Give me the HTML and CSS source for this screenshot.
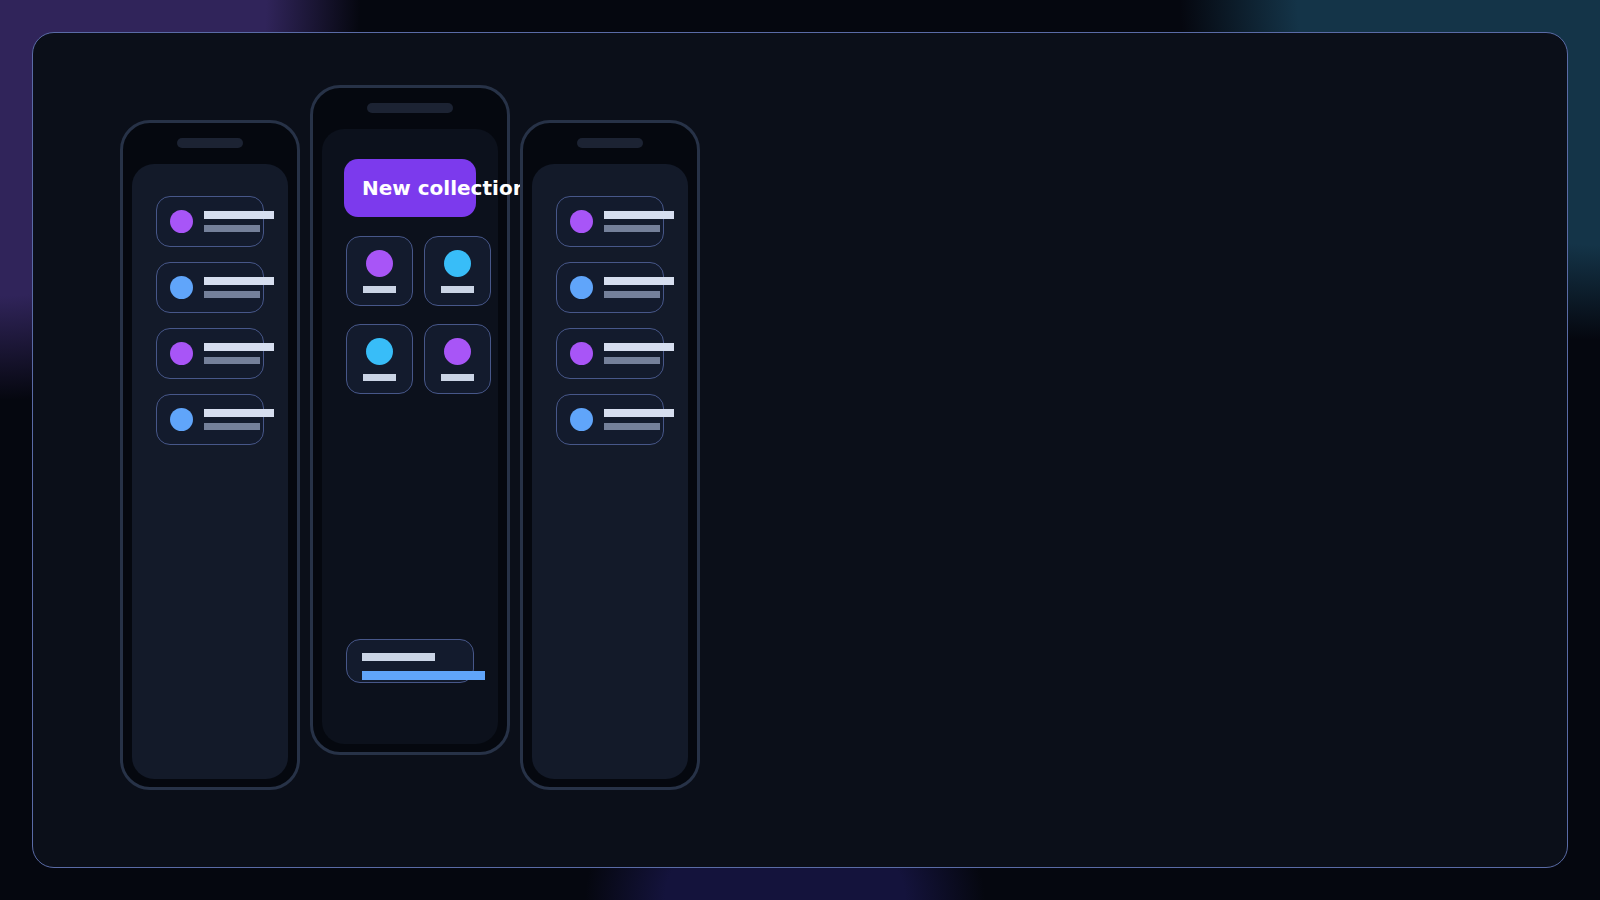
FILE: index.html
```
<!DOCTYPE html>
<html lang="en">
  <head>
    <meta charset="UTF-8" />
    <meta name="viewport" content="width=device-width, initial-scale=1.0" />
    <title>App Screens Preview</title>
    <link rel="stylesheet" href="styles.css">
  </head>
  <body>
    <div class="frame">
      <div class="phones">
        <!-- Feed list -->
        <div class="phone">
          <div class="notch"></div>
          <div class="screen">
            <div class="list-item">
              <span class="dot purple"></span>
              <div class="lines"><span class="line"></span><span class="line sub"></span></div>
            </div>
            <div class="list-item">
              <span class="dot blue"></span>
              <div class="lines"><span class="line"></span><span class="line sub"></span></div>
            </div>
            <div class="list-item">
              <span class="dot purple"></span>
              <div class="lines"><span class="line"></span><span class="line sub"></span></div>
            </div>
            <div class="list-item">
              <span class="dot blue"></span>
              <div class="lines"><span class="line"></span><span class="line sub"></span></div>
            </div>
          </div>
        </div>

        <!-- Collection screen -->
        <div class="phone featured">
          <div class="notch"></div>
          <div class="screen dark">
            <div class="collection-btn">New collection</div>
            <div class="tile-grid">
              <div class="tile"><span class="dot big purple"></span><span class="tile-bar"></span></div>
              <div class="tile"><span class="dot big cyan"></span><span class="tile-bar"></span></div>
              <div class="tile"><span class="dot big cyan"></span><span class="tile-bar"></span></div>
              <div class="tile"><span class="dot big purple"></span><span class="tile-bar"></span></div>
            </div>
            <div class="progress-card">
              <span class="progress-title"></span>
              <span class="progress-bar"></span>
            </div>
          </div>
        </div>

        <!-- Feed list (copy) -->
        <div class="phone">
          <div class="notch"></div>
          <div class="screen">
            <div class="list-item">
              <span class="dot purple"></span>
              <div class="lines"><span class="line"></span><span class="line sub"></span></div>
            </div>
            <div class="list-item">
              <span class="dot blue"></span>
              <div class="lines"><span class="line"></span><span class="line sub"></span></div>
            </div>
            <div class="list-item">
              <span class="dot purple"></span>
              <div class="lines"><span class="line"></span><span class="line sub"></span></div>
            </div>
            <div class="list-item">
              <span class="dot blue"></span>
              <div class="lines"><span class="line"></span><span class="line sub"></span></div>
            </div>
          </div>
        </div>
      </div>
    </div>
  </body>
</html>
```

FILE: styles.css
```
* {
  margin: 0;
  padding: 0;
  box-sizing: border-box;
  font-family: "DejaVu Sans", Verdana, sans-serif;
}

html,
body {
  height: 100%;
}

body {
  overflow: hidden;
  padding: 32px;
  background:
    radial-gradient(ellipse 360px 400px at 0 0, #30245a 0, #30245a 74%, rgba(48, 36, 90, 0) 100%),
    radial-gradient(ellipse 420px 340px at 100% 0, #143448 0, #143448 72%, rgba(20, 52, 72, 0) 100%),
    radial-gradient(ellipse 200px 140px at 785px 100%, #14133c 0, #14133c 60%, rgba(20, 19, 60, 0) 100%),
    #05070f;
}

.frame {
  height: 100%;
  background: #0b0f19;
  border: 1px solid #5a6ba6;
  border-radius: 22px;
  padding: 87px;
}

.phones {
  display: flex;
  align-items: flex-start;
  gap: 10px;
}

.phone {
  position: relative;
  width: 180px;
  height: 670px;
  display: flex;
  flex-direction: column;
  flex-shrink: 0;
  background: #05080f;
  border: 3px solid #273247;
  border-radius: 30px;
  padding: 15px 9px 8px;
}

.phone.featured {
  width: 200px;
  transform: translateY(-35px);
}

.notch {
  height: 10px;
  margin: 0 45px 16px;
  background: #1c2333;
  border-radius: 6px;
}

.screen {
  flex: 1;
  display: flex;
  flex-direction: column;
  gap: 15px;
  background: #131a29;
  border-radius: 22px;
  padding: 32px 24px;
}

.screen.dark {
  gap: 0;
  background: #0c111c;
  padding: 30px 24px 61px;
}

.dot {
  display: block;
  flex-shrink: 0;
  width: 23px;
  height: 23px;
  border-radius: 50%;
}

.dot.big {
  width: 27px;
  height: 27px;
}

.purple {
  background: #a855f7;
}

.blue {
  background: #60a5fa;
}

.cyan {
  background: #38bdf8;
}

/* list rows */
.list-item {
  display: flex;
  align-items: center;
  gap: 11px;
  background: #131b2d;
  border: 1px solid #475789;
  border-radius: 14px;
  padding: 13px;
}

.lines {
  width: 70px;
  flex-shrink: 0;
  display: flex;
  flex-direction: column;
  gap: 6px;
}

.line {
  display: block;
  height: 8px;
  background: #d6deef;
}

.line.sub {
  width: 56px;
  height: 7px;
  background: #74809a;
}

/* collection screen */
.collection-btn {
  margin: 0 -2px;
  padding: 17px 18px;
  background: #7c3aed;
  color: #ffffff;
  font-size: 20px;
  font-weight: bold;
  border-radius: 14px;
  white-space: nowrap;
}

.tile-grid {
  display: grid;
  grid-template-columns: 67px 67px;
  column-gap: 11px;
  row-gap: 18px;
  margin-top: 19px;
}

.tile {
  height: 70px;
  display: flex;
  flex-direction: column;
  align-items: center;
  gap: 9px;
  background: #131b2d;
  border: 1px solid #475789;
  border-radius: 14px;
  padding-top: 13px;
}

.tile-bar {
  display: block;
  width: 33px;
  height: 7px;
  background: #cad4e5;
}

.progress-card {
  margin-top: auto;
  height: 44px;
  display: flex;
  flex-direction: column;
  gap: 10px;
  background: #131b2d;
  border: 1px solid #475789;
  border-radius: 14px;
  padding: 13px 15px 0;
}

.progress-title {
  display: block;
  flex-shrink: 0;
  width: 73px;
  height: 8px;
  background: #cbd5e6;
}

.progress-bar {
  display: block;
  flex-shrink: 0;
  width: 123px;
  height: 9px;
  background: #60a5fa;
}
```
